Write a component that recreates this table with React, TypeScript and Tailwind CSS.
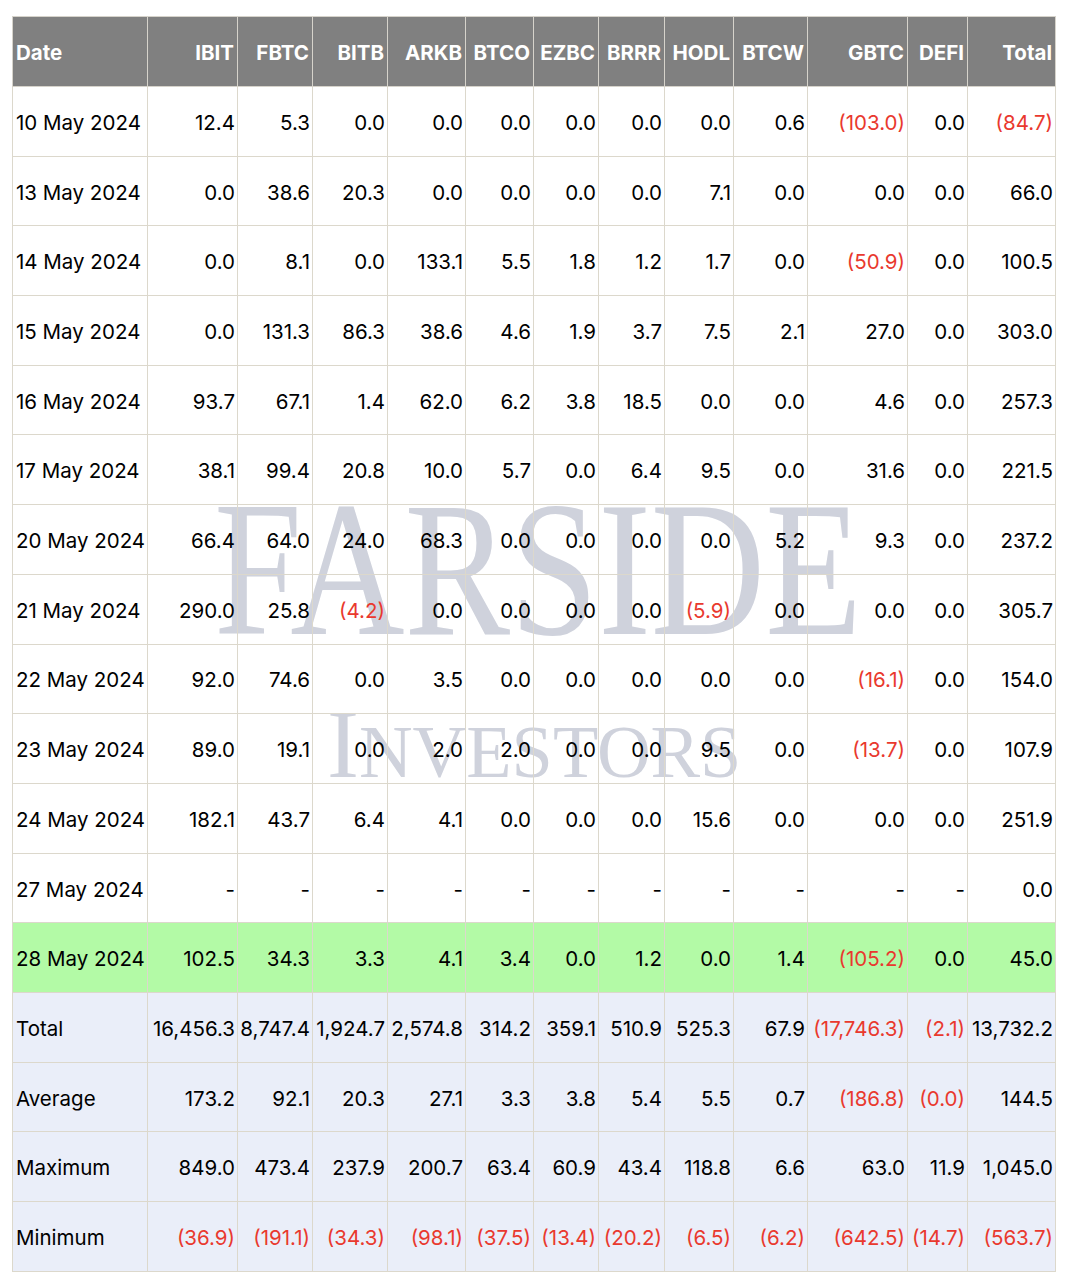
import clsx from "clsx";

/*
 * Bitcoin ETF flow table (US$m). Negative flows are shown in brackets and red.
 */

const columns = [
  { key: "Date", width: "w-[135px]" },
  { key: "IBIT", width: "w-[90px]" },
  { key: "FBTC", width: "w-[75px]" },
  { key: "BITB", width: "w-[75px]" },
  { key: "ARKB", width: "w-[78px]" },
  { key: "BTCO", width: "w-[68px]" },
  { key: "EZBC", width: "w-[65px]" },
  { key: "BRRR", width: "w-[66px]" },
  { key: "HODL", width: "w-[69px]" },
  { key: "BTCW", width: "w-[74px]" },
  { key: "GBTC", width: "w-[100px]" },
  { key: "DEFI", width: "w-[60px]" },
  { key: "Total", width: "w-[88px]" },
];

type Row = { label: string; values: string[]; kind?: "latest" | "summary" };

const rows: Row[] = [
  { label: "10 May 2024", values: ["12.4", "5.3", "0.0", "0.0", "0.0", "0.0", "0.0", "0.0", "0.6", "(103.0)", "0.0", "(84.7)"] },
  { label: "13 May 2024", values: ["0.0", "38.6", "20.3", "0.0", "0.0", "0.0", "0.0", "7.1", "0.0", "0.0", "0.0", "66.0"] },
  { label: "14 May 2024", values: ["0.0", "8.1", "0.0", "133.1", "5.5", "1.8", "1.2", "1.7", "0.0", "(50.9)", "0.0", "100.5"] },
  { label: "15 May 2024", values: ["0.0", "131.3", "86.3", "38.6", "4.6", "1.9", "3.7", "7.5", "2.1", "27.0", "0.0", "303.0"] },
  { label: "16 May 2024", values: ["93.7", "67.1", "1.4", "62.0", "6.2", "3.8", "18.5", "0.0", "0.0", "4.6", "0.0", "257.3"] },
  { label: "17 May 2024", values: ["38.1", "99.4", "20.8", "10.0", "5.7", "0.0", "6.4", "9.5", "0.0", "31.6", "0.0", "221.5"] },
  { label: "20 May 2024", values: ["66.4", "64.0", "24.0", "68.3", "0.0", "0.0", "0.0", "0.0", "5.2", "9.3", "0.0", "237.2"] },
  { label: "21 May 2024", values: ["290.0", "25.8", "(4.2)", "0.0", "0.0", "0.0", "0.0", "(5.9)", "0.0", "0.0", "0.0", "305.7"] },
  { label: "22 May 2024", values: ["92.0", "74.6", "0.0", "3.5", "0.0", "0.0", "0.0", "0.0", "0.0", "(16.1)", "0.0", "154.0"] },
  { label: "23 May 2024", values: ["89.0", "19.1", "0.0", "2.0", "2.0", "0.0", "0.0", "9.5", "0.0", "(13.7)", "0.0", "107.9"] },
  { label: "24 May 2024", values: ["182.1", "43.7", "6.4", "4.1", "0.0", "0.0", "0.0", "15.6", "0.0", "0.0", "0.0", "251.9"] },
  { label: "27 May 2024", values: ["-", "-", "-", "-", "-", "-", "-", "-", "-", "-", "-", "0.0"] },
  { label: "28 May 2024", kind: "latest", values: ["102.5", "34.3", "3.3", "4.1", "3.4", "0.0", "1.2", "0.0", "1.4", "(105.2)", "0.0", "45.0"] },
  { label: "Total", kind: "summary", values: ["16,456.3", "8,747.4", "1,924.7", "2,574.8", "314.2", "359.1", "510.9", "525.3", "67.9", "(17,746.3)", "(2.1)", "13,732.2"] },
  { label: "Average", kind: "summary", values: ["173.2", "92.1", "20.3", "27.1", "3.3", "3.8", "5.4", "5.5", "0.7", "(186.8)", "(0.0)", "144.5"] },
  { label: "Maximum", kind: "summary", values: ["849.0", "473.4", "237.9", "200.7", "63.4", "60.9", "43.4", "118.8", "6.6", "63.0", "11.9", "1,045.0"] },
  { label: "Minimum", kind: "summary", values: ["(36.9)", "(191.1)", "(34.3)", "(98.1)", "(37.5)", "(13.4)", "(20.2)", "(6.5)", "(6.2)", "(642.5)", "(14.7)", "(563.7)"] },
];

function Watermark() {
  // Sits behind the table; body cells are transparent so it shows through.
  return (
    <div className="pointer-events-none absolute inset-0 z-0 font-['Liberation_Serif',serif] text-[#cfd2dc] select-none">
      <div className="absolute top-[473px] left-[214px] origin-left scale-x-[0.82] text-[193px] leading-none whitespace-nowrap">
        FARSIDE
      </div>
      <div className="absolute top-[696px] left-[327px] origin-left scale-x-[0.99] leading-none whitespace-nowrap">
        <span className="text-[97px]">I</span>
        <span className="text-[75px]">NVESTORS</span>
      </div>
    </div>
  );
}

export default function App() {
  return (
    <div className="relative min-h-screen bg-white pt-[16px] pl-[12px] font-['Inter',sans-serif] text-[20.5px] text-black">
      <Watermark />
      <table className="relative z-10 w-[1043px] table-fixed border-collapse">
        <colgroup>
          {columns.map((c) => (
            <col key={c.key} className={c.width} />
          ))}
        </colgroup>
        <thead>
          <tr className="h-[70px] bg-[#808080] text-white">
            {columns.map((c, i) => (
              <th
                key={c.key}
                className={clsx(
                  "border border-[#d6d3cb] px-[3px] pt-[4px] font-bold",
                  i === 0 ? "text-left" : "text-right",
                )}
              >
                {c.key}
              </th>
            ))}
          </tr>
        </thead>
        <tbody>
          {rows.map((row) => (
            <tr
              key={row.label}
              className={clsx(
                "h-[69.7px]",
                row.kind === "latest" && "bg-[#b3faa6]",
                row.kind === "summary" && "bg-[#eaeef9]",
              )}
            >
              <td className="border border-[#dcd8cc] px-[3px] pt-[4px] text-left whitespace-nowrap">
                {row.label}
              </td>
              {row.values.map((v, i) => (
                <td
                  key={i}
                  className={clsx(
                    "border border-[#dcd8cc] px-[2px] pt-[4px] text-right whitespace-nowrap",
                    v.startsWith("(") && "text-[#e9392e]",
                  )}
                >
                  {v}
                </td>
              ))}
            </tr>
          ))}
        </tbody>
      </table>
    </div>
  );
}
